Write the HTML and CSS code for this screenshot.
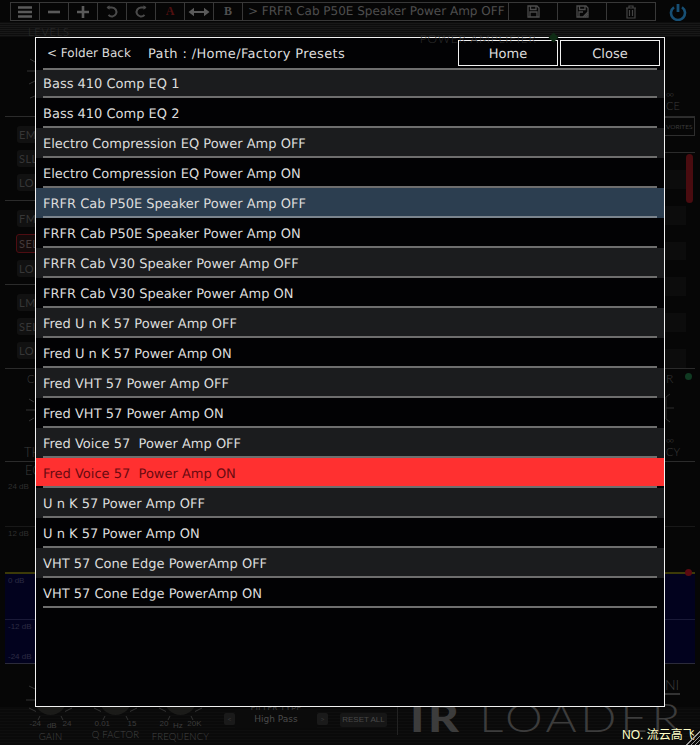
FILE: index.html
```html
<!DOCTYPE html>
<html lang="en">
<head>
    <meta charset="UTF-8">
    <meta name="viewport" content="width=device-width, initial-scale=1.0">
    <title>IR Loader - Preset Browser</title>
    <link rel="stylesheet" href="styles.css">
</head>
<body>
    <div class="plugin">
        <div class="toolbar">
            <div class="tool">
                <svg width="16" height="12" viewBox="0 0 16 12"><path d="M1 1.5h14M1 6h14M1 10.5h14" stroke="#5a5a5a" stroke-width="2.4"/></svg>
            </div>
            <div class="tool">
                <svg width="14" height="12" viewBox="0 0 14 12"><path d="M1 6h12" stroke="#5a5a5a" stroke-width="2.6"/></svg>
            </div>
            <div class="tool">
                <svg width="14" height="14" viewBox="0 0 14 14"><path d="M1 7h12M7 1v12" stroke="#5a5a5a" stroke-width="2.6"/></svg>
            </div>
            <div class="tool">
                <svg width="14" height="14" viewBox="0 0 14 14"><path d="M2.5 2.5h4.5a4.5 4.5 0 1 1 -3.5 7.4" fill="none" stroke="#4a4a4a" stroke-width="2"/><path d="M4.5 .2v4.6l-3-2.3z" fill="#4a4a4a"/></svg>
            </div>
            <div class="tool">
                <svg width="14" height="14" viewBox="0 0 14 14"><path d="M11.5 2.5h-4.5a4.5 4.5 0 1 0 3.5 7.4" fill="none" stroke="#4a4a4a" stroke-width="2"/><path d="M9.5 .2v4.6l3-2.3z" fill="#4a4a4a"/></svg>
            </div>
            <div class="tool letter letter-a">A</div>
            <div class="tool">
                <svg width="22" height="10" viewBox="0 0 22 10"><path d="M4 5h14" stroke="#5a5a5a" stroke-width="2"/><path d="M6 .8v8.4l-5.5-4.2zM16 .8v8.4l5.5-4.2z" fill="#5a5a5a"/></svg>
            </div>
            <div class="tool letter">B</div>
            <div class="tool preset-name">&gt; FRFR Cab P50E Speaker Power Amp OFF</div>
            <div class="tool tool-wide">
                <svg width="13" height="13" viewBox="0 0 13 13"><path d="M1 1h9l2 2v9h-11zM3.5 1v3.5h5.5v-3.5M3 12v-5h7v5" fill="none" stroke="#4c4c4c" stroke-width="1.3"/></svg>
            </div>
            <div class="tool tool-wide">
                <svg width="13" height="13" viewBox="0 0 13 13"><path d="M1 1h9l2 2v9h-11zM3.5 1v3.5h5.5v-3.5M3 12v-5h4" fill="none" stroke="#4c4c4c" stroke-width="1.3"/><path d="M7 12l5-5M9 12l3-3" stroke="#4c4c4c" stroke-width="1.3"/></svg>
            </div>
            <div class="tool tool-wide">
                <svg width="12" height="14" viewBox="0 0 12 14"><path d="M1 3h10M4 3v-2h4v2M2 3v10h8v-10M4.5 5v6M7.5 5v6" fill="none" stroke="#444" stroke-width="1.2"/></svg>
            </div>
            <svg class="power" width="18" height="18" viewBox="0 0 18 18"><path d="M5 4.2a7 7 0 1 0 8 0" fill="none" stroke="#174f74" stroke-width="2.6"/><path d="M9 1v8" stroke="#174f74" stroke-width="2.8"/></svg>
        </div>

        <div class="band">
            <span class="caption caption-levels">LEVELS</span>
            <span class="caption caption-power">POWER AMPLIFIER</span>
            <i class="power-led"></i>
        </div>

        <div class="rack">
            <div class="strip strip-left">
                <div class="sect sect-knob">
                    <svg width="35" height="76" viewBox="0 0 35 76"><path d="M30 19l5 3M27 31h8M29 44l6-3M30 58l5-2" stroke="#333" stroke-width="1"/></svg>
                </div>
                <div class="sect sect-switches">
                    <div class="switch">EM</div><div class="switch">SLL</div><div class="switch">LO</div>
                </div>
                <div class="sect sect-switches">
                    <div class="switch">FM</div><div class="switch switch-red">SEL</div><div class="switch">LO</div>
                </div>
                <div class="sect sect-switches">
                    <div class="switch">LM</div><div class="switch">SEL</div><div class="switch">LO</div>
                </div>
                <div class="sect sect-comp">
                    <span class="label label-c">C</span>
                    <svg width="35" height="40" viewBox="0 0 35 40"><path d="M29 14l5 3M26 25h9M29 36l5-3" stroke="#333" stroke-width="1"/></svg>
                    <span class="label label-th">TH</span>
                </div>
                <div class="sect sect-db24">
                    <span class="label label-eq">EQ</span>
                    <span class="db">24 dB</span>
                </div>
                <div class="sect sect-db12"><span class="db">12 dB</span></div>
                <div class="sect sect-blue">
                    <span class="db">0 dB</span>
                    <span class="db">-12 dB</span>
                    <span class="db">-24 dB</span>
                </div>
                <div class="sect sect-end">
                    <svg width="35" height="43" viewBox="0 0 35 43"><path d="M29 22l6 3M26 36h9" stroke="#333" stroke-width="1"/></svg>
                </div>
            </div>

            <div class="strip strip-right">
                <div class="sect sect-knob sect-knob-r">
                    <span class="label">∞</span>
                    <span class="label">CE</span>
                </div>
                <div class="sect sect-fav"><div class="fav-btn">VORITES</div></div>
                <div class="sect sect-slots">
                    <div class="slots">
                        <i></i><i></i><i></i><i></i><i></i><i></i>
                    </div>
                    <div class="scroll-thumb"></div>
                </div>
                <div class="sect sect-comp sect-comp-r">
                    <div class="comp-top"><span class="label">R</span><i class="led-green"></i></div>
                    <svg width="35" height="40" viewBox="0 0 35 40"><path d="M5 7l-4 3M1 10v22M1 32l4 3M1 21h8" stroke="#2c2c2c" stroke-width="1" fill="none"/></svg>
                    <span class="label">∞</span>
                    <span class="label">CY</span>
                </div>
                <div class="sect sect-db24"></div>
                <div class="sect sect-db12"></div>
                <div class="sect sect-blue sect-blue-r"><i class="eq-dot"></i></div>
                <div class="sect sect-end sect-end-r">
                    <span class="logo">NI</span>
                    <span class="logo-sub"></span>
                </div>
            </div>
        </div>

        <div class="footer">
            <div class="knob-col">
                <svg class="knob-cap" width="65" height="13" viewBox="0 0 65 13"><circle cx="32.5" cy="-8" r="16" fill="#1b1b19"/><path d="M11 1l7 3.5M54 1l-7 3.5M20 13l2-4M45 13l-2-4" stroke="#333" stroke-width="1"/></svg>
                <div class="scale"><span>-24</span><span class="scale-unit">dB</span><span>24</span></div>
                <div class="knob-name">GAIN</div>
            </div>
            <div class="knob-col">
                <svg class="knob-cap" width="65" height="13" viewBox="0 0 65 13"><circle cx="32.5" cy="-8" r="16" fill="#1b1b19"/><path d="M11 1l7 3.5M54 1l-7 3.5M20 13l2-4M45 13l-2-4" stroke="#333" stroke-width="1"/></svg>
                <div class="scale"><span>0.01</span><span>15</span></div>
                <div class="knob-name">Q FACTOR</div>
            </div>
            <div class="knob-col">
                <svg class="knob-cap" width="65" height="13" viewBox="0 0 65 13"><circle cx="32.5" cy="-8" r="16" fill="#1b1b19"/><path d="M11 1l7 3.5M54 1l-7 3.5M20 13l2-4M45 13l-2-4" stroke="#333" stroke-width="1"/></svg>
                <div class="scale"><span>20</span><span class="scale-unit">Hz</span><span>20K</span></div>
                <div class="knob-name">FREQUENCY</div>
            </div>
            <div class="filter">
                <div class="filter-title">FILTER TYPE</div>
                <div class="filter-row">
                    <div class="arrow">&lt;</div>
                    <div class="filter-value">High Pass</div>
                    <div class="arrow">&gt;</div>
                </div>
            </div>
            <div class="reset">RESET ALL</div>
            <div class="divider"></div>
            <div class="brand"><b>IR</b> LOADER</div>
        </div>
    </div>

    <!-- preset browser, sits over the plugin -->
    <div class="browser">
        <div class="browser-head">
            <span class="back">&lt; Folder Back</span>
            <span class="path">Path : /Home/Factory Presets</span>
            <button class="head-btn">Home</button>
            <button class="head-btn">Close</button>
        </div>
        <div class="head-line"></div>
        <div class="presets">
            <div class="preset"><div class="name">Bass 410 Comp EQ 1</div></div>
            <div class="preset"><div class="name">Bass 410 Comp EQ 2</div></div>
            <div class="preset"><div class="name">Electro Compression EQ Power Amp OFF</div></div>
            <div class="preset"><div class="name">Electro Compression EQ Power Amp ON</div></div>
            <div class="preset hover"><div class="name">FRFR Cab P50E Speaker Power Amp OFF</div></div>
            <div class="preset"><div class="name">FRFR Cab P50E Speaker Power Amp ON</div></div>
            <div class="preset"><div class="name">FRFR Cab V30 Speaker Power Amp OFF</div></div>
            <div class="preset"><div class="name">FRFR Cab V30 Speaker Power Amp ON</div></div>
            <div class="preset"><div class="name">Fred U n K 57 Power Amp OFF</div></div>
            <div class="preset"><div class="name">Fred U n K 57 Power Amp ON</div></div>
            <div class="preset"><div class="name">Fred VHT 57 Power Amp OFF</div></div>
            <div class="preset"><div class="name">Fred VHT 57 Power Amp ON</div></div>
            <div class="preset"><div class="name">Fred Voice 57&nbsp; Power Amp OFF</div></div>
            <div class="preset"><div class="name">Fred Voice 57&nbsp; Power Amp ON</div></div>
            <div class="preset"><div class="name">U n K 57 Power Amp OFF</div></div>
            <div class="preset"><div class="name">U n K 57 Power Amp ON</div></div>
            <div class="preset"><div class="name">VHT 57 Cone Edge PowerAmp OFF</div></div>
            <div class="preset"><div class="name">VHT 57 Cone Edge PowerAmp ON</div></div>
        </div>
    </div>

    <div class="watermark">NO. 流云高飞</div>
    <div class="grip"></div>
</body>
</html>
```

FILE: styles.css
```css
html, body {
    margin: 0;
    height: 100%;
}

body {
    position: relative;
    width: 700px;
    height: 745px;
    overflow: hidden;
    background-color: #050505;
    font-family: "Lato", "Liberation Sans", sans-serif;
}

.plugin {
    display: flex;
    flex-direction: column;
    height: 745px;
}

/* Toolbar */
.toolbar {
    display: flex;
    align-items: flex-start;
    height: 22px;
    padding: 2px 0 0 10px;
    box-sizing: border-box;
    background-color: #060606;
}

.tool {
    display: flex;
    flex: none;
    align-items: center;
    justify-content: center;
    width: 28px;
    height: 17px;
    border: 1px solid #383838;
    margin-right: -1px;
}

.letter {
    font-family: "Liberation Serif", serif;
    font-weight: bold;
    font-size: 12px;
    color: #505050;
}

.letter-a {
    color: #501010;
}

.preset-name {
    justify-content: flex-start;
    width: 260px;
    padding-left: 5px;
    font-family: "DejaVu Sans", sans-serif;
    font-size: 12px;
    line-height: 19px;
    color: #4e4e4e;
    white-space: nowrap;
    text-rendering: geometricPrecision;
}

.tool-wide {
    width: 48px;
}

.power {
    margin: 1px 0 0 14px;
}

.band {
    position: relative;
    display: flex;
    height: 0;
    z-index: 1;
}

.caption {
    color: #2e2e2e;
    font-size: 11px;
    letter-spacing: 0.8px;
    font-weight: 300;
    white-space: nowrap;
}

.caption-levels {
    margin: 3px 0 0 28px;
}

.caption-power {
    margin: 9px 0 0 350px;
    font-size: 12px;
}

.power-led {
    width: 7px;
    height: 7px;
    margin: 12px 0 0 13px;
    background-color: #0e2c14;
    transform: rotate(45deg);
}

/* Dim plugin behind the browser */
.rack {
    display: flex;
    justify-content: space-between;
    height: 685px;
    background-color: #060606;
    background-image: repeating-linear-gradient(#0d0d0d 0, #0d0d0d 1px, #181818 1px, #181818 2px);
    background-size: 100% 15px;
    background-repeat: no-repeat;
}

.strip {
    width: 35px;
    display: flex;
    flex-direction: column;
}

.sect {
    box-sizing: border-box;
    flex: none;
}

.strip-left .sect {
    margin-left: 5px;
}

.sect-knob {
    height: 94px;
    padding-top: 18px;
}

.strip-left .sect-knob svg,
.strip-left .sect-comp svg,
.strip-left .sect-end svg {
    display: block;
    margin-left: -5px;
}

.sect-switches {
    height: 84px;
    border-top: 1px solid #2b2b2b;
    padding-top: 9px;
    display: flex;
    flex-direction: column;
    gap: 7px;
}

.switch {
    width: 40px;
    height: 17px;
    margin-left: 12px;
    padding-left: 2px;
    line-height: 17px;
    border-radius: 3px;
    background-color: #111;
    color: #363636;
    font-size: 11px;
    letter-spacing: 0.5px;
}

.switch-red {
    margin-left: 11px;
    border: 1px solid #4e0d12;
    background-color: #130a0a;
    color: #443a3a;
}

.sect-comp {
    height: 93px;
    border-top: 1px solid #2b2b2b;
    display: flex;
    flex-direction: column;
}

.label {
    color: #3a3a3a;
    font-size: 11px;
    line-height: 12px;
    font-weight: 300;
}

.label-c {
    padding: 4px 0 0 22px;
}

.label-th {
    padding: 21px 0 0 19px;
    font-size: 13px;
}

.sect-db24 {
    height: 65px;
    border-top: 1px solid #2b2b2b;
}

.label-eq {
    display: block;
    padding: 2px 0 0 20px;
    font-size: 13px;
}

.db {
    display: block;
    padding: 6px 0 0 3px;
    color: #2f2f2f;
    font-family: "Liberation Sans", sans-serif;
    font-size: 8px;
    line-height: 10px;
    white-space: nowrap;
}

.sect-db12 {
    height: 46px;
    border-top: 1px solid #181818;
}

.sect-db12 .db {
    padding-top: 2px;
}

.sect-blue {
    position: relative;
    height: 92px;
    border-top: 2px solid #3c3a08;
    border-bottom: 1px solid #2b2b3a;
    background-image: linear-gradient(#02021e 45px, #1a1a38 45px, #1a1a38 46px, #02021e 46px);
}

.sect-blue .db {
    color: #2c2c44;
    padding-top: 2px;
}

.sect-blue .db:nth-child(2) {
    padding-top: 36px;
}

.sect-blue .db:nth-child(3) {
    padding-top: 20px;
}

.sect-end {
    height: 43px;
}

/* Right strip */
.strip-right .sect {
    margin-right: 5px;
}

.sect-knob-r {
    padding-top: 66px;
    display: flex;
    flex-direction: column;
}

.sect-knob-r .label,
.sect-comp-r .label {
    padding-left: 1px;
}

.sect-fav {
    height: 36px;
    border-top: 1px solid #2b2b2b;
}

.fav-btn {
    width: 28px;
    height: 17px;
    border: 1px solid #2e2e2e;
    border-left: none;
    color: #3a3a3a;
    font-size: 6.5px;
    line-height: 17px;
    padding-left: 1px;
}

.sect-slots {
    display: flex;
    height: 216px;
    border-top: 1px solid #2b2b2b;
    padding-top: 1px;
}

.slots {
    display: flex;
    flex-direction: column;
    gap: 17px;
    width: 21px;
    padding-top: 16px;
}

.slots i {
    display: block;
    height: 19px;
    background-color: #0c0c0c;
}

.scroll-thumb {
    width: 7px;
    height: 49px;
    border-radius: 4px;
    background-color: #4a0c10;
}

.comp-top {
    display: flex;
    justify-content: space-between;
    padding: 4px 3px 0 0;
}

.comp-top .label {
    font-size: 12px;
}

.led-green {
    width: 7px;
    height: 7px;
    border-radius: 50%;
    background-color: #103a22;
}

.sect-comp-r svg {
    margin: 2px 0 7px;
    flex: none;
}

.sect-blue-r .eq-dot {
    position: absolute;
    top: -5px;
    right: 3px;
    width: 7px;
    height: 7px;
    border-radius: 50%;
    background-color: #5a0a10;
}

.sect-end-r {
    padding-top: 14px;
}

.logo {
    display: block;
    color: #3e3e3e;
    font-size: 14px;
    line-height: 14px;
    font-weight: 300;
}

.logo-sub {
    display: block;
    width: 15px;
    height: 2px;
    margin-top: 1px;
    background-color: #333;
}

/* Footer below the browser */
.footer {
    display: flex;
    align-items: flex-start;
    flex: 1;
    padding-left: 18px;
    background-image: repeating-linear-gradient(#0a0a0a 0, #0a0a0a 2px, #0e0e0e 2px, #0e0e0e 3px);
}

.knob-col {
    width: 65px;
    display: flex;
    flex-direction: column;
    align-items: center;
}

.knob-cap {
    display: block;
    margin-bottom: -2px;
}

.scale {
    display: flex;
    justify-content: space-between;
    width: 42px;
    color: #3c3c3c;
    font-size: 8px;
    line-height: 11px;
    font-family: "Liberation Sans", sans-serif;
}

.scale-unit {
    padding-top: 2px;
}

.knob-name {
    margin-top: -1px;
    color: #444;
    font-size: 9.5px;
    line-height: 14px;
    font-weight: 300;
    white-space: nowrap;
    letter-spacing: 0.2px;
}

.filter {
    width: 104px;
    margin-left: 11px;
}

.filter-title {
    height: 4px;
    overflow: hidden;
    color: #3a3a3a;
    font-size: 9px;
    line-height: 2px;
    text-align: center;
}

.filter-row {
    display: flex;
    align-items: center;
    justify-content: space-between;
    margin-top: -1px;
}

.arrow {
    width: 11px;
    height: 12px;
    border-radius: 2px;
    background-color: #1a1a1a;
    color: #363636;
    font-size: 8px;
    line-height: 12px;
    text-align: center;
}

.filter-value {
    flex: 1;
    background-color: #0b0b0b;
    color: #4a4a4a;
    font-family: "DejaVu Sans", sans-serif;
    font-size: 9px;
    line-height: 18px;
    text-align: center;
}

.reset {
    flex: none;
    width: 47px;
    height: 14px;
    margin: 6px 0 0 12px;
    border-radius: 2px;
    background-color: #161616;
    color: #484848;
    font-family: "Liberation Sans", sans-serif;
    font-size: 8px;
    line-height: 14px;
    text-align: center;
    white-space: nowrap;
}

.divider {
    flex: none;
    width: 1px;
    height: 28px;
    margin-left: 10px;
    background-color: #222;
}

.brand {
    flex: none;
    height: 45px;
    margin: -17px 0 0 12px;
    color: #3c3c3c;
    font-size: 39px;
    font-weight: 300;
    line-height: 54px;
    letter-spacing: 3px;
    white-space: nowrap;
    transform: scaleX(1.22);
    transform-origin: left top;
}

.brand b {
    font-weight: 900;
}

/* Preset browser */
.browser {
    position: absolute;
    left: 35px;
    top: 37px;
    width: 630px;
    height: 670px;
    box-sizing: border-box;
    border: 1px solid #f2f2f2;
    background-color: #020204;
    font-family: "DejaVu Sans", sans-serif;
    font-size: 13px;
    color: #dcdcdc;
    text-rendering: geometricPrecision;
}

.browser-head {
    display: flex;
    align-items: center;
    gap: 2px;
    height: 30px;
    padding: 0 4px 0 11px;
    box-sizing: border-box;
}

.back {
    width: 99px;
    font-size: 12px;
}

.path {
    flex: 1;
    padding-top: 2px;
    letter-spacing: 0.35px;
}

.head-btn {
    width: 100px;
    height: 26px;
    padding: 2px 0 0;
    border: 1px solid #f2f2f2;
    background-color: #020204;
    color: #dcdcdc;
    font-family: inherit;
    font-size: 13px;
    text-rendering: inherit;
}

.head-line {
    height: 2px;
    margin: 0 7px;
    background-color: #6e6e6e;
}

.preset:first-child .name {
    height: 26px;
    line-height: 30px;
}

.preset:nth-child(odd) {
    background-color: #1b1c1e;
}

.preset::after {
    content: "";
    display: block;
    height: 2px;
    margin: 0 7px;
    background-color: #6e6e6e;
}

.name {
    height: 28px;
    padding-left: 7px;
    line-height: 34px;
    white-space: pre;
}

.preset.hover {
    background-color: #2c3e50;
}

.preset.hover::after {
    background-color: #7b848d;
}

.preset:nth-child(14) {
    background-color: #020204;
}

.preset:nth-child(14) .name {
    background-color: #ff3030;
    color: #6a0a10;
}

/* Overlays in the bottom corner */
.watermark {
    position: absolute;
    right: 0;
    bottom: 3px;
    width: 78px;
    color: #ffffc8;
    font-family: "Liberation Sans", "Noto Sans CJK SC", sans-serif;
    font-size: 12px;
    line-height: 14px;
    white-space: nowrap;
}

.grip {
    position: absolute;
    right: 0;
    bottom: 0;
    width: 17px;
    height: 17px;
    background-image: repeating-linear-gradient(135deg, transparent 0, transparent 2px, #9a9a9a 2px, #9a9a9a 3px);
    clip-path: polygon(100% 0, 100% 100%, 0 100%);
}
```
